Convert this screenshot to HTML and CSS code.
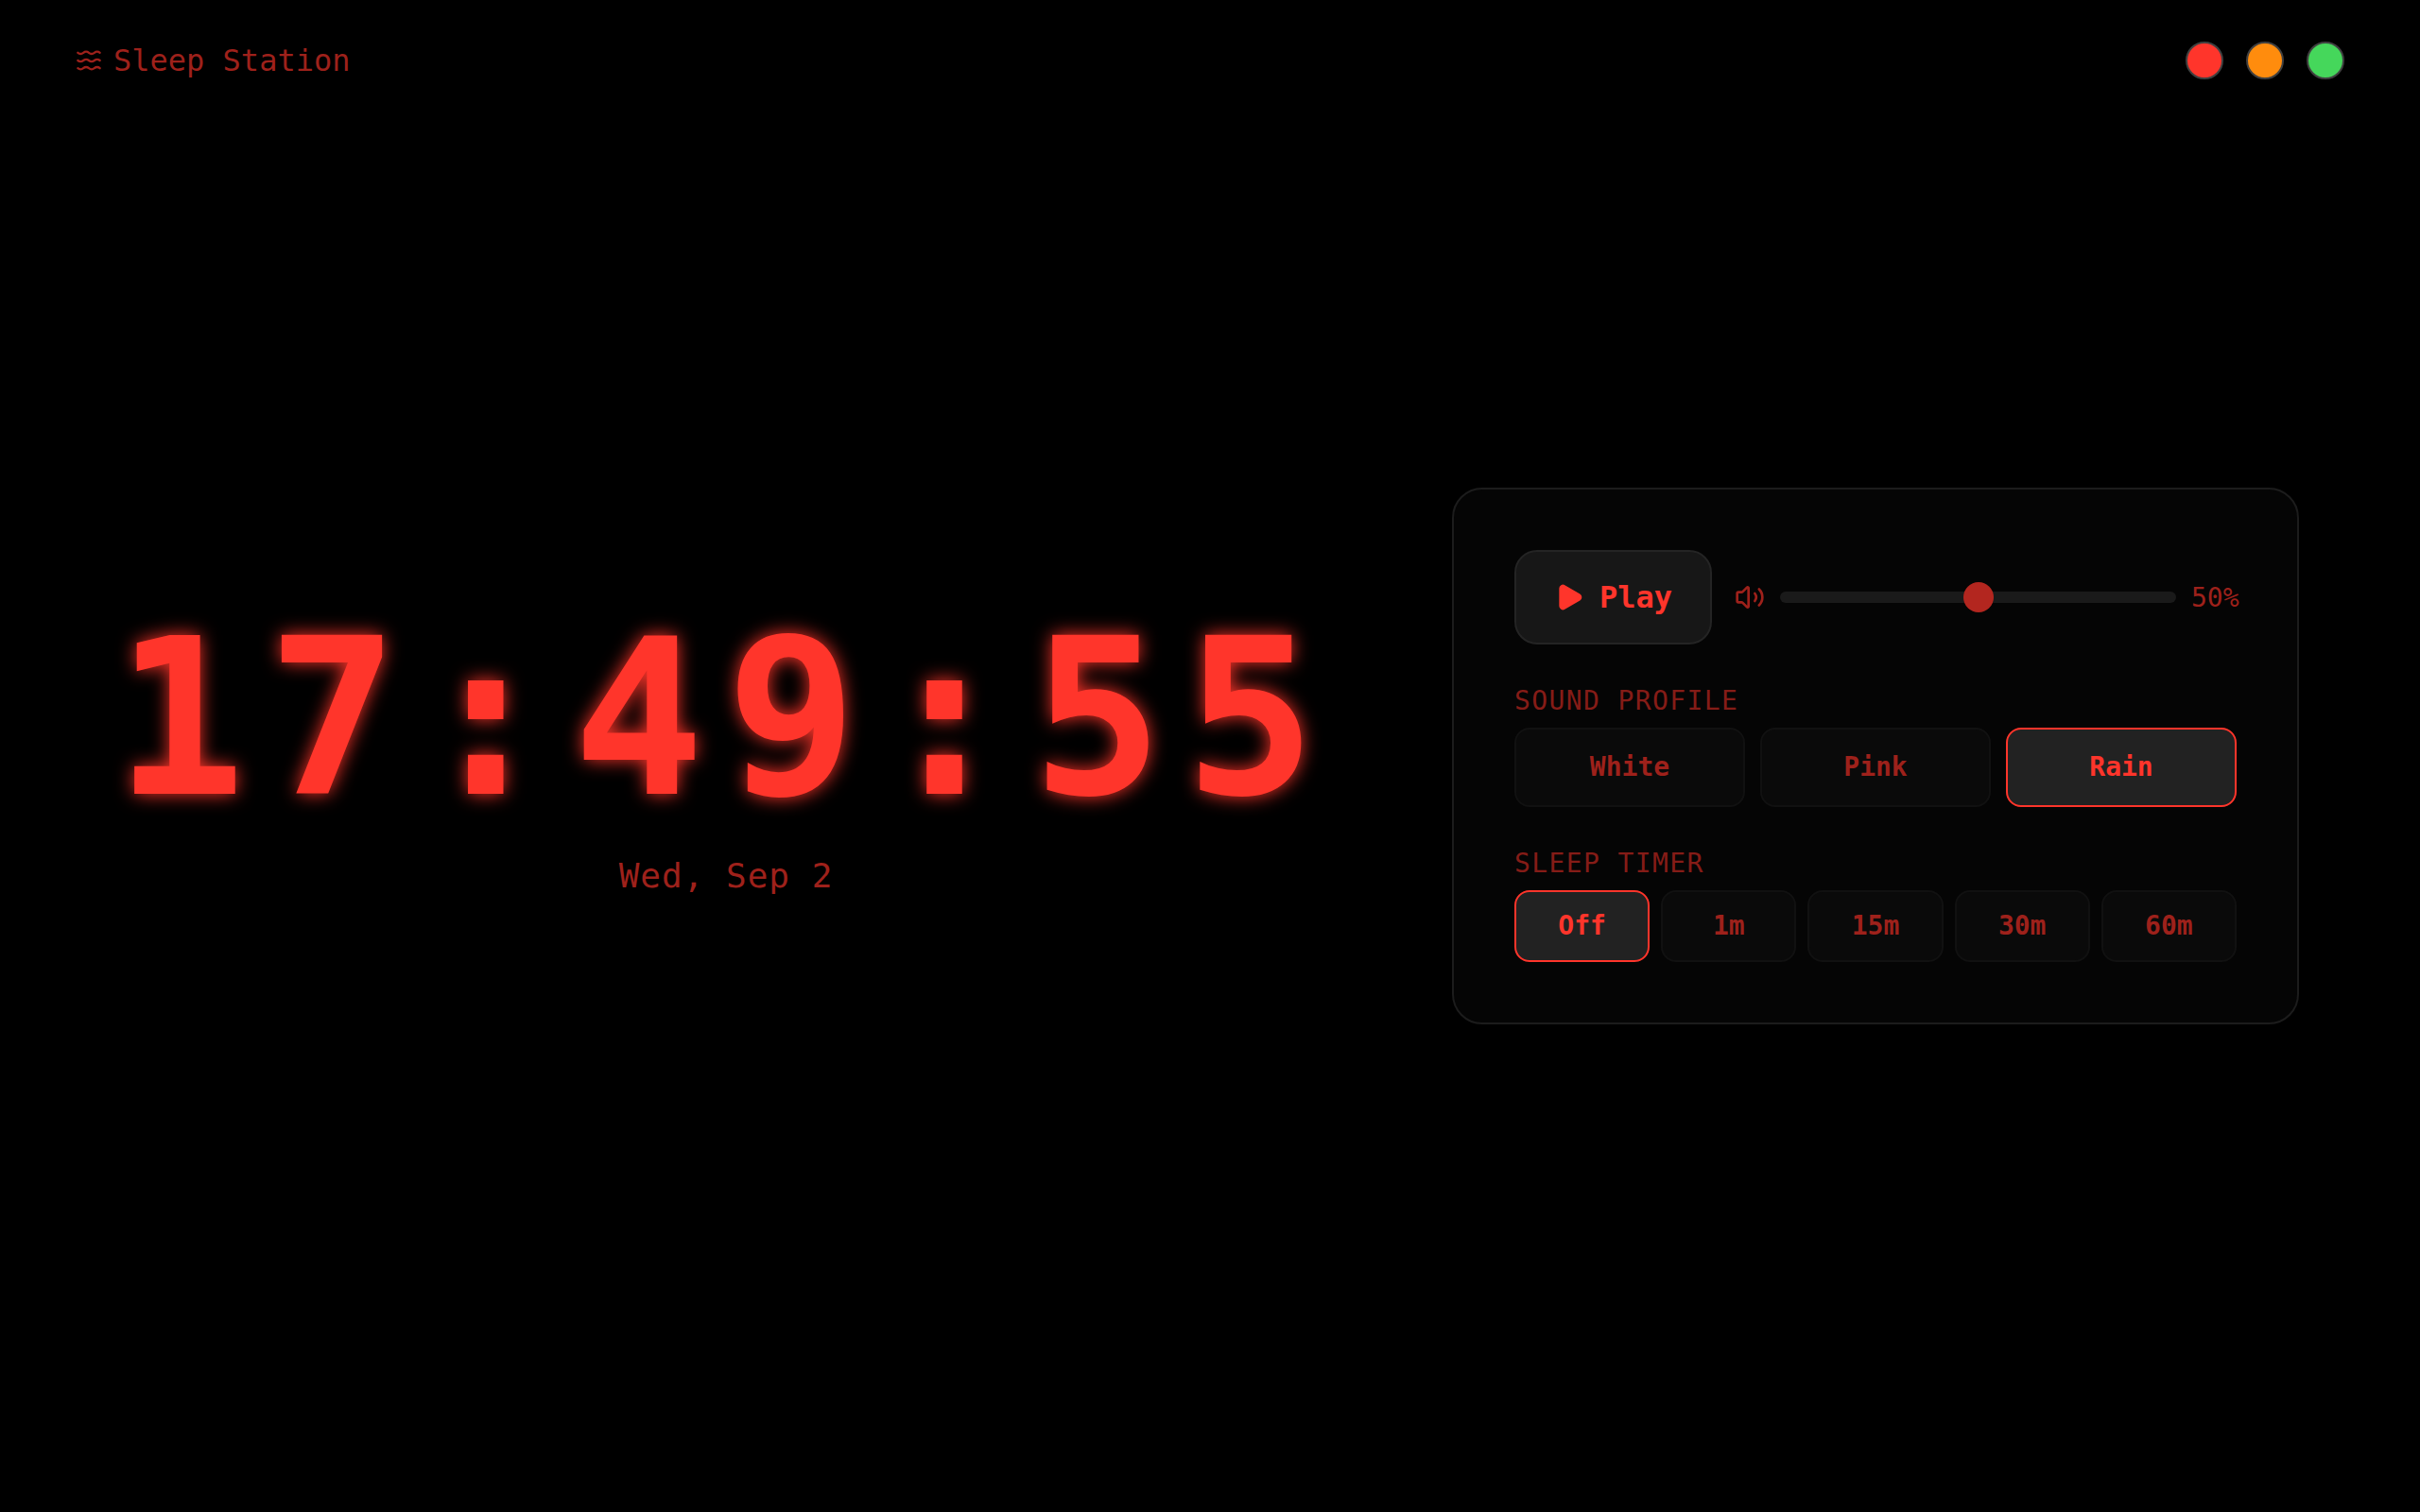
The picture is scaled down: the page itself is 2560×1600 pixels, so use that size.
FILE: index.html
```
<!DOCTYPE html>
<html lang="en">
<head>
<meta charset="utf-8">
<title>Sleep Station</title>
<link rel="stylesheet" href="styles.css">
</head>
<body>
<div class="app">
  <header class="topbar">
    <h1 class="brand">
      <svg class="brand-icon" viewBox="0 0 24 24" aria-hidden="true">
        <path d="M2 5c.6.5 1.200 1 2.500 1 2.500 0 2.500-2 5-2 2.600 0 2.400 2 5 2 2.500 0 2.500-2 5-2 1.300 0 1.900.5 2.500 1"/>
        <path d="M2 12c.6.5 1.200 1 2.500 1 2.500 0 2.500-2 5-2 2.600 0 2.400 2 5 2 2.500 0 2.500-2 5-2 1.300 0 1.900.5 2.500 1"/>
        <path d="M2 19c.6.5 1.200 1 2.500 1 2.500 0 2.500-2 5-2 2.600 0 2.400 2 5 2 2.500 0 2.500-2 5-2 1.300 0 1.900.5 2.500 1"/>
      </svg>
      Sleep Station
    </h1>
    <div class="window-controls">
      <button class="dot dot-close" type="button" aria-label="Close"></button>
      <button class="dot dot-minimize" type="button" aria-label="Minimize"></button>
      <button class="dot dot-maximize" type="button" aria-label="Maximize"></button>
    </div>
  </header>
  <main class="stage">
    <section class="clock">
      <time class="clock-time">17:49:55</time>
      <p class="clock-date">Wed, Sep 2</p>
    </section>
    <section class="panel">
      <div class="playback">
        <button class="play" type="button">
          <svg class="icon icon-solid" viewBox="0 0 24 24" aria-hidden="true"><path d="M5 5a2 2 0 0 1 3.008-1.728l11.997 6.998a2 2 0 0 1 .003 3.458l-12 7A2 2 0 0 1 5 19z"/></svg>
          Play
        </button>
        <label class="volume">
          <svg class="icon" viewBox="0 0 24 24" role="img" aria-label="Volume"><path d="M11 4.702a.705.705 0 0 0-1.203-.498L6.413 7.587A1.400 1.400 0 0 1 5.416 8H3a1 1 0 0 0-1 1v6a1 1 0 0 0 1 1h2.416a1.400 1.400 0 0 1 .997.413l3.383 3.384A.705.705 0 0 0 11 19.298z"/><path d="M16 9a5 5 0 0 1 0 6"/><path d="M19.364 18.364a9 9 0 0 0 0-12.728"/></svg>
          <input class="slider" type="range" min="0" max="100" value="50">
          <span class="volume-value">50%</span>
        </label>
      </div>
      <div class="group">
        <h2 class="group-label">SOUND PROFILE</h2>
        <div class="options profiles">
          <button class="option" type="button">White</button>
          <button class="option" type="button">Pink</button>
          <button class="option active" type="button">Rain</button>
        </div>
      </div>
      <div class="group">
        <h2 class="group-label">SLEEP TIMER</h2>
        <div class="options timers">
          <button class="option active" type="button">Off</button>
          <button class="option" type="button">1m</button>
          <button class="option" type="button">15m</button>
          <button class="option" type="button">30m</button>
          <button class="option" type="button">60m</button>
        </div>
      </div>
    </section>
  </main>
</div>
</body>
</html>
```
FILE: styles.css
```
:root {
  --red: #ff352b;
  --red-muted: #9e211b;
  --red-dim: #851c17;
}

* {
  box-sizing: border-box;
}

body {
  margin: 0;
  background: #000;
  color: var(--red-muted);
  font-family: "DejaVu Sans Mono", monospace;
  font-size: 28px;
}

button {
  font: inherit;
  font-weight: 700;
  cursor: pointer;
}

.app {
  display: grid;
  grid-template-rows: 128px 1fr 128px;
  min-height: 100vh;
}

.topbar {
  display: flex;
  align-items: center;
  justify-content: space-between;
  padding: 0 80px;
}

.brand {
  display: flex;
  align-items: center;
  gap: 12px;
  margin: 0;
  font-size: 32px;
  font-weight: 400;
}

.brand-icon {
  width: 28px;
  height: 28px;
  fill: none;
  stroke: currentColor;
  stroke-width: 2;
  stroke-linecap: round;
}

.window-controls {
  display: flex;
  gap: 24px;
}

.dot {
  width: 40px;
  height: 40px;
  padding: 0;
  border: 2px solid #404040;
  border-radius: 50%;
}

.dot-close { background: var(--red); }
.dot-minimize { background: #ff8c0d; }
.dot-maximize { background: #45d75b; }

.stage {
  display: grid;
  grid-template-columns: minmax(0, 10fr) minmax(0, 7fr);
  gap: 128px;
  align-items: center;
  padding: 0 128px;
}

.clock {
  display: flex;
  flex-direction: column;
  align-items: center;
  gap: 24px;
}

.clock-time {
  color: var(--red);
  font-size: 9vw;
  font-weight: 700;
  line-height: 1;
  letter-spacing: 0.1em;
  text-shadow: 0 0 20px var(--red);
}

.clock-date {
  margin: 0;
  font-size: 36px;
  line-height: 56px;
  letter-spacing: 1px;
}

.panel {
  display: flex;
  flex-direction: column;
  gap: 40px;
  padding: 64px;
  border: 2px solid #1c1c1c;
  border-radius: 32px;
  background: #050505;
}

.playback {
  display: flex;
  align-items: center;
  gap: 24px;
}

.play {
  display: flex;
  align-items: center;
  gap: 16px;
  height: 100px;
  padding: 0 40px;
  border: 2px solid #242424;
  border-radius: 24px;
  background: #171717;
  color: var(--red);
  font-size: 32px;
}

.icon {
  flex: none;
  width: 32px;
  height: 32px;
  fill: none;
  stroke: currentColor;
  stroke-width: 2;
  stroke-linecap: round;
  stroke-linejoin: round;
}

.icon-solid {
  fill: currentColor;
}

.volume {
  display: flex;
  flex: 1;
  align-items: center;
  gap: 16px;
  min-width: 0;
}

.slider {
  flex: 1;
  min-width: 0;
  height: 12px;
  margin: 0;
  border-radius: 6px;
  background: #1a1a1a;
  appearance: none;
}

.slider::-webkit-slider-thumb {
  width: 32px;
  height: 32px;
  border-radius: 50%;
  background: #b3261f;
  appearance: none;
}

.volume-value {
  width: 48px;
}

.group {
  display: flex;
  flex-direction: column;
  gap: 8px;
}

.group-label {
  margin: 0;
  color: var(--red-dim);
  font-size: 28px;
  font-weight: 400;
  line-height: 40px;
  letter-spacing: 0.05em;
}

.options {
  display: grid;
}

.profiles {
  grid-template-columns: repeat(3, 1fr);
  grid-auto-rows: 84px;
  gap: 16px;
}

.timers {
  grid-template-columns: repeat(5, 1fr);
  grid-auto-rows: 76px;
  gap: 12px;
}

.option {
  padding: 0 0 2px;
  border: 2px solid #111;
  border-radius: 16px;
  background: #0a0a0a;
  color: var(--red-muted);
}

.option.active {
  border-color: var(--red);
  background: #222;
  color: var(--red);
}
```
